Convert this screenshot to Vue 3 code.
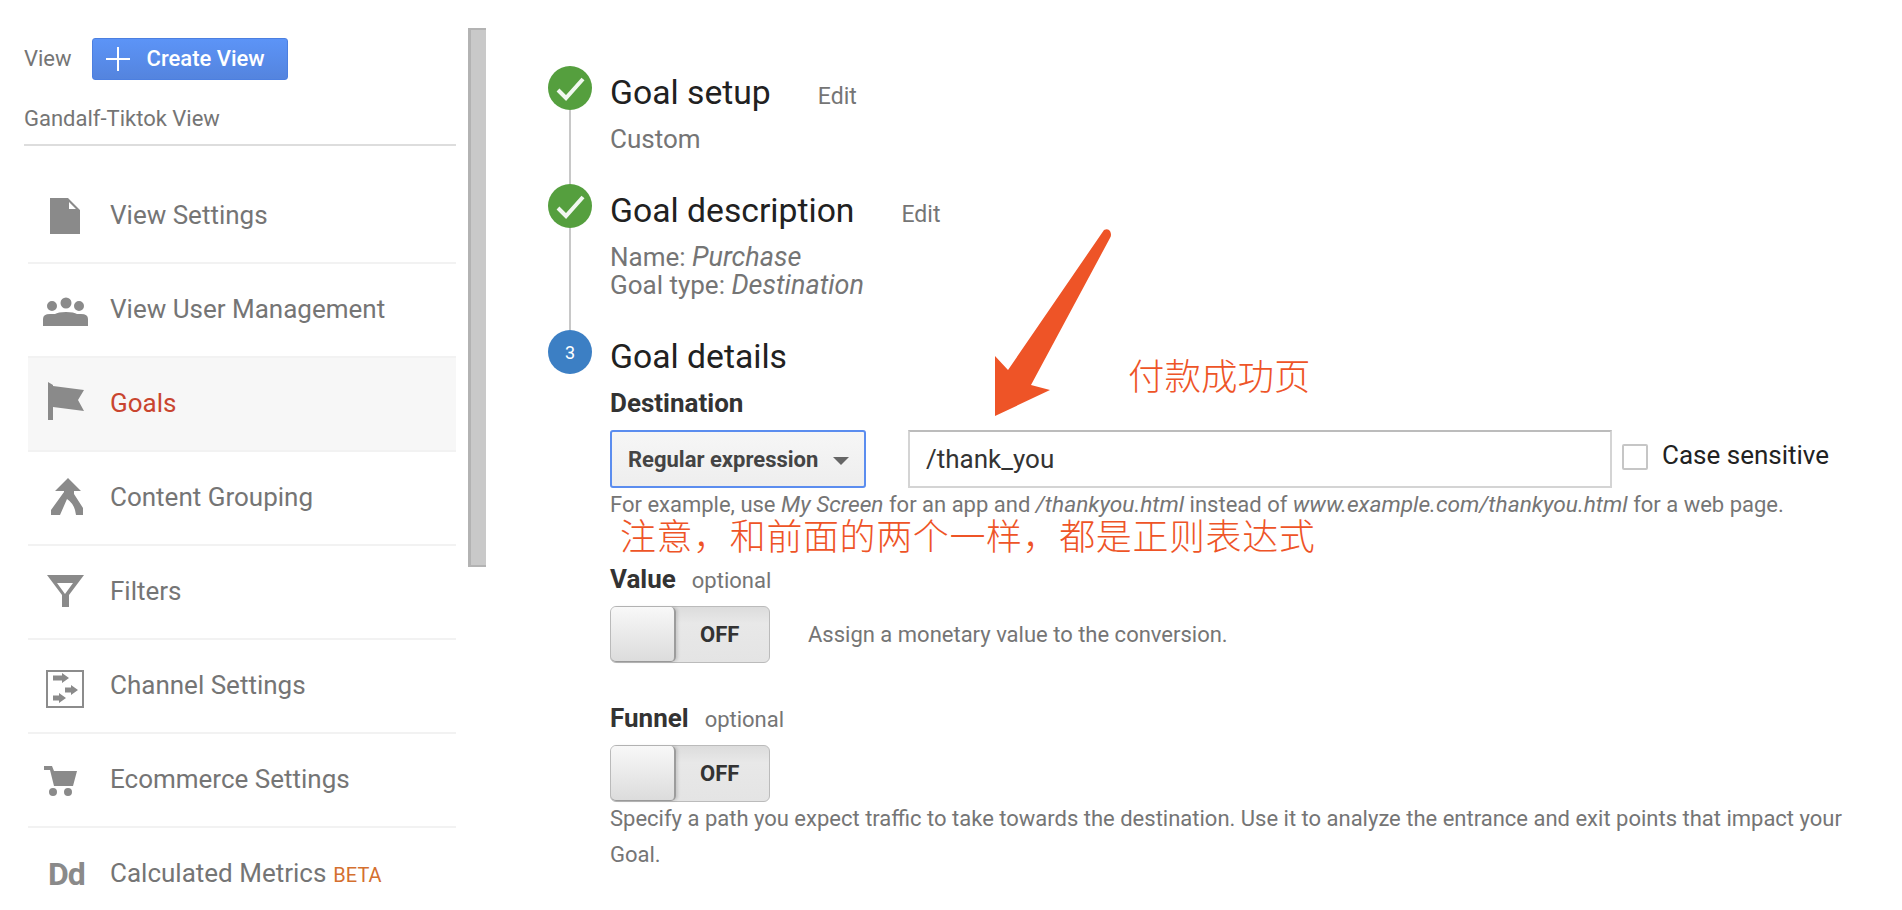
<script setup>
const navItems = [
  { label: 'View Settings', d: 'M10 6H28L40 18V42H10ZM29 10V17H36Z' },
  { label: 'View User Management', d: 'M12 15a5 5 0 1 1 0 10a5 5 0 1 1 0-10ZM26 11.500a5.500 5.500 0 1 1 0 11a5.500 5.500 0 1 1 0-11ZM39 15a5 5 0 1 1 0 10a5 5 0 1 1 0-10ZM3 40V33Q3 28 10 28H15Q18 26 26 26T37 28H41Q48 28 48 33V40Z' },
  { label: 'Goals', active: true, d: 'M8 2L13 5V40H8ZM13 6L44 10L38 20L44 31L13 27Z' },
  { label: 'Content Grouping', d: 'M28 4L41 17H34V20L43 34V41H36L35 36Q33 29 27 25L20 41H11V36L24 18V17H15Z' },
  { label: 'Filters', d: 'M7 7H44L29 27V39H22V27ZM17 15L25 26L33 15Z' },
  { label: 'Channel Settings', box: true, d: 'M13 13.500H22V11L29 16L22 21V18.500H13ZM25 25.500H31V23L38 28L31 33V30.500H25ZM13 33.500H19V31L26 36L19 41V38.500H13Z' },
  { label: 'Ecommerce Settings', d: 'M4 10H12L14 15H37L33 30H14L10 14H4ZM13 32a4 4 0 1 1 0 8a4 4 0 1 1 0-8ZM28 32a4 4 0 1 1 0 8a4 4 0 1 1 0-8Z' },
  { label: 'Calculated Metrics', beta: true, text: 'Dd' }
]
</script>

<template>
  <div class="page">
    <aside class="sidebar">
      <div class="view-head">
        <span class="view-word">View</span>
        <div class="create-btn">
          <svg class="plus" viewBox="0 0 24 24" width="24" height="24">
            <path d="M11 0h2v11h11v2H13v11h-2V13H0v-2h11z" fill="#fff" />
          </svg>
          <span>Create View</span>
        </div>
      </div>
      <div class="view-name">Gandalf-Tiktok View</div>
      <ul class="nav">
        <li v-for="item in navItems" :key="item.label" class="nav-row" :class="{ active: item.active }">
          <span v-if="item.text" class="dd-icon">{{ item.text }}</span>
          <svg v-else class="nav-icon" viewBox="0 0 48 48" width="48" height="48">
            <rect v-if="item.box" x="7" y="9" width="36" height="36" fill="none" stroke="#8c8c8c" stroke-width="2" />
            <path :d="item.d" fill="#8a8a8a" fill-rule="evenodd" />
          </svg>
          <span class="nav-label">{{ item.label }}</span>
          <span v-if="item.beta" class="beta">BETA</span>
        </li>
      </ul>
    </aside>

    <div class="scrollbar"></div>

    <main class="main">
      <section class="step step-one">
        <div class="rail">
          <div class="dot done">
            <svg viewBox="0 0 44 44" width="44" height="44"><path d="M10 24L18 32L35 13" fill="none" stroke="#fff" stroke-width="4" opacity="0.92" /></svg>
          </div>
          <div class="line"></div>
        </div>
        <div class="step-body">
          <div class="title-row"><h2>Goal setup</h2><a>Edit</a></div>
          <p class="summary first">Custom</p>
        </div>
      </section>

      <section class="step step-two">
        <div class="rail">
          <div class="dot done">
            <svg viewBox="0 0 44 44" width="44" height="44"><path d="M10 24L18 32L35 13" fill="none" stroke="#fff" stroke-width="4" opacity="0.92" /></svg>
          </div>
          <div class="line"></div>
        </div>
        <div class="step-body">
          <div class="title-row"><h2>Goal description</h2><a>Edit</a></div>
          <p class="summary">Name: <em>Purchase</em></p>
          <p class="summary">Goal type: <em>Destination</em></p>
        </div>
      </section>

      <section class="step">
        <div class="rail">
          <div class="dot current">3</div>
        </div>
        <div class="step-body">
          <div class="title-row"><h2>Goal details</h2></div>
          <div class="field-label dest">Destination</div>
          <div class="dest-row">
            <div class="select"><span>Regular expression</span><i class="caret"></i></div>
            <div class="input">/thank_you</div>
            <div class="checkbox"></div>
            <span class="case">Case sensitive</span>
          </div>
          <p class="help">For example, use <em>My Screen</em> for an app and <em>/thankyou.html</em> instead of <em>www.example.com/thankyou.html</em> for a web page.</p>
          <p class="note">注意，和前面的两个一样，都是正则表达式</p>
          <div class="field-label value"><b>Value</b><span>optional</span></div>
          <div class="toggle-row">
            <div class="toggle"><div class="knob"></div><span>OFF</span></div>
            <span class="assign">Assign a monetary value to the conversion.</span>
          </div>
          <div class="field-label funnel"><b>Funnel</b><span>optional</span></div>
          <div class="toggle-row">
            <div class="toggle"><div class="knob"></div><span>OFF</span></div>
          </div>
          <p class="specify">Specify a path you expect traffic to take towards the destination. Use it to analyze the entrance and exit points that impact your Goal.</p>
        </div>
      </section>

      <svg class="arrow" viewBox="0 0 125 190" width="125" height="190">
        <path d="M109 2Q113 0 115 3Q117 7 115 10L36 157L55 162L0 188V128L13 142Z" fill="#ee5427" />
      </svg>
      <div class="callout">付款成功页</div>
    </main>
  </div>
</template>

<style>
html, body { margin: 0; background: #fff; }
</style>

<style scoped>
.page {
  display: flex;
  align-items: flex-start;
  height: 910px;
  overflow: hidden;
  background: #fff;
  font-family: Roboto, "Noto Sans CJK SC", sans-serif;
  color: #757575;
}
.sidebar {
  width: 432px;
  margin-left: 24px;
  padding-top: 38px;
  flex: none;
}
.view-head {
  display: flex;
  align-items: center;
  font-size: 22px;
  gap: 20px;
}
.view-word { margin-top: -2px; }
.create-btn {
  display: flex;
  align-items: center;
  box-sizing: border-box;
  width: 196px;
  height: 42px;
  padding: 0 0 2px 13px;
  gap: 17px;
  color: #fff;
  font-weight: 500;
  background: linear-gradient(#5c94f7, #5484de);
  border: 1px solid #4c7fe0;
  border-radius: 3px;
}
.plus { margin-top: 2px; }
.view-name {
  margin-top: 25px;
  font-size: 22px;
  line-height: 28px;
}
.nav {
  list-style: none;
  margin: 11px 0 0;
  padding: 24px 0 0 4px;
  border-top: 2px solid #ddd;
}
.nav-row {
  display: flex;
  align-items: center;
  box-sizing: border-box;
  height: 94px;
  padding-left: 12px;
  border-bottom: 2px solid #f2f2f2;
  font-size: 26px;
}
.nav-row.active {
  background: #f7f7f7;
  color: #c9452f;
}
.nav-icon {
  flex: none;
  filter: blur(0.4px);
}
.dd-icon {
  box-sizing: border-box;
  width: 48px;
  padding-left: 8px;
  font-size: 32px;
  font-weight: 700;
  color: #8a8a8a;
  letter-spacing: -1px;
  flex: none;
}
.nav-label {
  margin-left: 22px;
  margin-top: -3px;
}
.beta {
  margin-left: 7px;
  margin-top: 1px;
  font-size: 20px;
  color: #d4702f;
}
.scrollbar {
  box-sizing: border-box;
  flex: none;
  width: 18px;
  height: 539px;
  margin: 28px 0 0 12px;
  background: #c9c9c9;
  border-left: 3px solid #b3b3b3;
  border-top: 2px solid #b3b3b3;
  border-bottom: 2px solid #b3b3b3;
}
.main {
  position: relative;
  flex: none;
  margin-left: 62px;
  padding-top: 66px;
}
.step {
  display: flex;
  gap: 18px;
}
.step-one { height: 118px; }
.step-two { height: 146px; }
.rail {
  width: 44px;
  flex: none;
  display: flex;
  flex-direction: column;
  align-items: center;
}
.dot {
  display: flex;
  align-items: center;
  justify-content: center;
  width: 44px;
  height: 44px;
  border-radius: 50%;
  flex: none;
}
.done { background: #559f3e; }
.current {
  background: #3c7fc4;
  color: #fff;
  font-size: 18px;
}
.line {
  flex: 1;
  width: 2px;
  background: #c8c8c8;
}
.step-body {
  width: 1250px;
  padding-top: 4px;
}
.title-row {
  display: flex;
  align-items: center;
  height: 44px;
}
h2 {
  margin: 0;
  font-size: 33.7px;
  font-weight: 400;
  color: #212121;
}
.title-row a {
  margin-left: 47px;
  margin-top: 8px;
  font-size: 23px;
  color: #757575;
}
p { margin: 0; }
.summary {
  font-size: 26px;
  line-height: 28px;
}
.summary em { font-size: 27px; }
.summary.first { margin-top: 11px; }
.step-two .summary:nth-of-type(1) { margin-top: 11px; }
.field-label {
  font-size: 26px;
  line-height: 28px;
  color: #333;
}
.field-label b { font-weight: 700; }
.field-label span {
  margin-left: 16px;
  font-size: 22px;
  color: #757575;
}
.dest {
  margin-top: 11px;
  font-weight: 700;
}
.dest-row {
  display: flex;
  align-items: center;
  margin-top: 13px;
}
.select {
  display: flex;
  align-items: center;
  box-sizing: border-box;
  width: 256px;
  height: 58px;
  padding-left: 16px;
  font-size: 22px;
  font-weight: 700;
  color: #444;
  background: linear-gradient(#f6f6f6, #eeeeee);
  border: 2px solid #5b8def;
  border-radius: 3px;
}
.caret {
  margin-left: 15px;
  margin-top: 3px;
  border-left: 8px solid transparent;
  border-right: 8px solid transparent;
  border-top: 8px solid #666;
}
.input {
  display: flex;
  align-items: center;
  box-sizing: border-box;
  width: 704px;
  height: 58px;
  margin-left: 42px;
  padding-left: 16px;
  font-size: 26px;
  color: #333;
  border: 2px solid #d4d4d4;
  border-top-color: #bcbcbc;
}
.checkbox {
  box-sizing: border-box;
  width: 26px;
  height: 26px;
  margin-left: 10px;
  margin-top: -4px;
  border: 2px solid #c6c6c6;
  border-radius: 2px;
}
.case {
  margin-left: 14px;
  margin-top: -8px;
  font-size: 26px;
  color: #222;
}
.help {
  margin-top: 3px;
  font-size: 22px;
  line-height: 28px;
}
.help em { font-size: 22.7px; }
.note {
  margin: -1px 0 0 10px;
  font-size: 36px;
  letter-spacing: 0.6px;
  line-height: 40px;
  font-weight: 300;
  color: #ee5427;
}
.value { margin-top: 7px; }
.funnel { margin-top: 41px; }
.toggle-row {
  display: flex;
  align-items: center;
  margin-top: 11px;
}
.toggle {
  position: relative;
  display: flex;
  align-items: center;
  box-sizing: border-box;
  width: 160px;
  height: 57px;
  padding-left: 89px;
  font-size: 22px;
  font-weight: 700;
  color: #333;
  background: linear-gradient(#dcdcdc, #e8e8e8 30%, #e4e4e4);
  border: 1px solid #bbb;
  border-radius: 6px;
}
.knob {
  position: absolute;
  left: 0;
  top: 0;
  bottom: 0;
  width: 63px;
  background: linear-gradient(#f8f8f8, #dcdcdc);
  border-right: 2px solid #9c9c9c;
  border-bottom: 1px solid #999;
  border-radius: 5px;
  box-shadow: 2px 0 3px rgba(0, 0, 0, 0.12);
}
.assign {
  margin-left: 38px;
  font-size: 22px;
}
.specify {
  margin-top: -1px;
  font-size: 22px;
  line-height: 36px;
}
.arrow {
  position: absolute;
  left: 447px;
  top: 228px;
}
.callout {
  position: absolute;
  left: 580px;
  top: 355px;
  font-size: 36.500px;
  line-height: 46px;
  font-weight: 300;
  color: #ee5427;
  white-space: nowrap;
}
</style>
